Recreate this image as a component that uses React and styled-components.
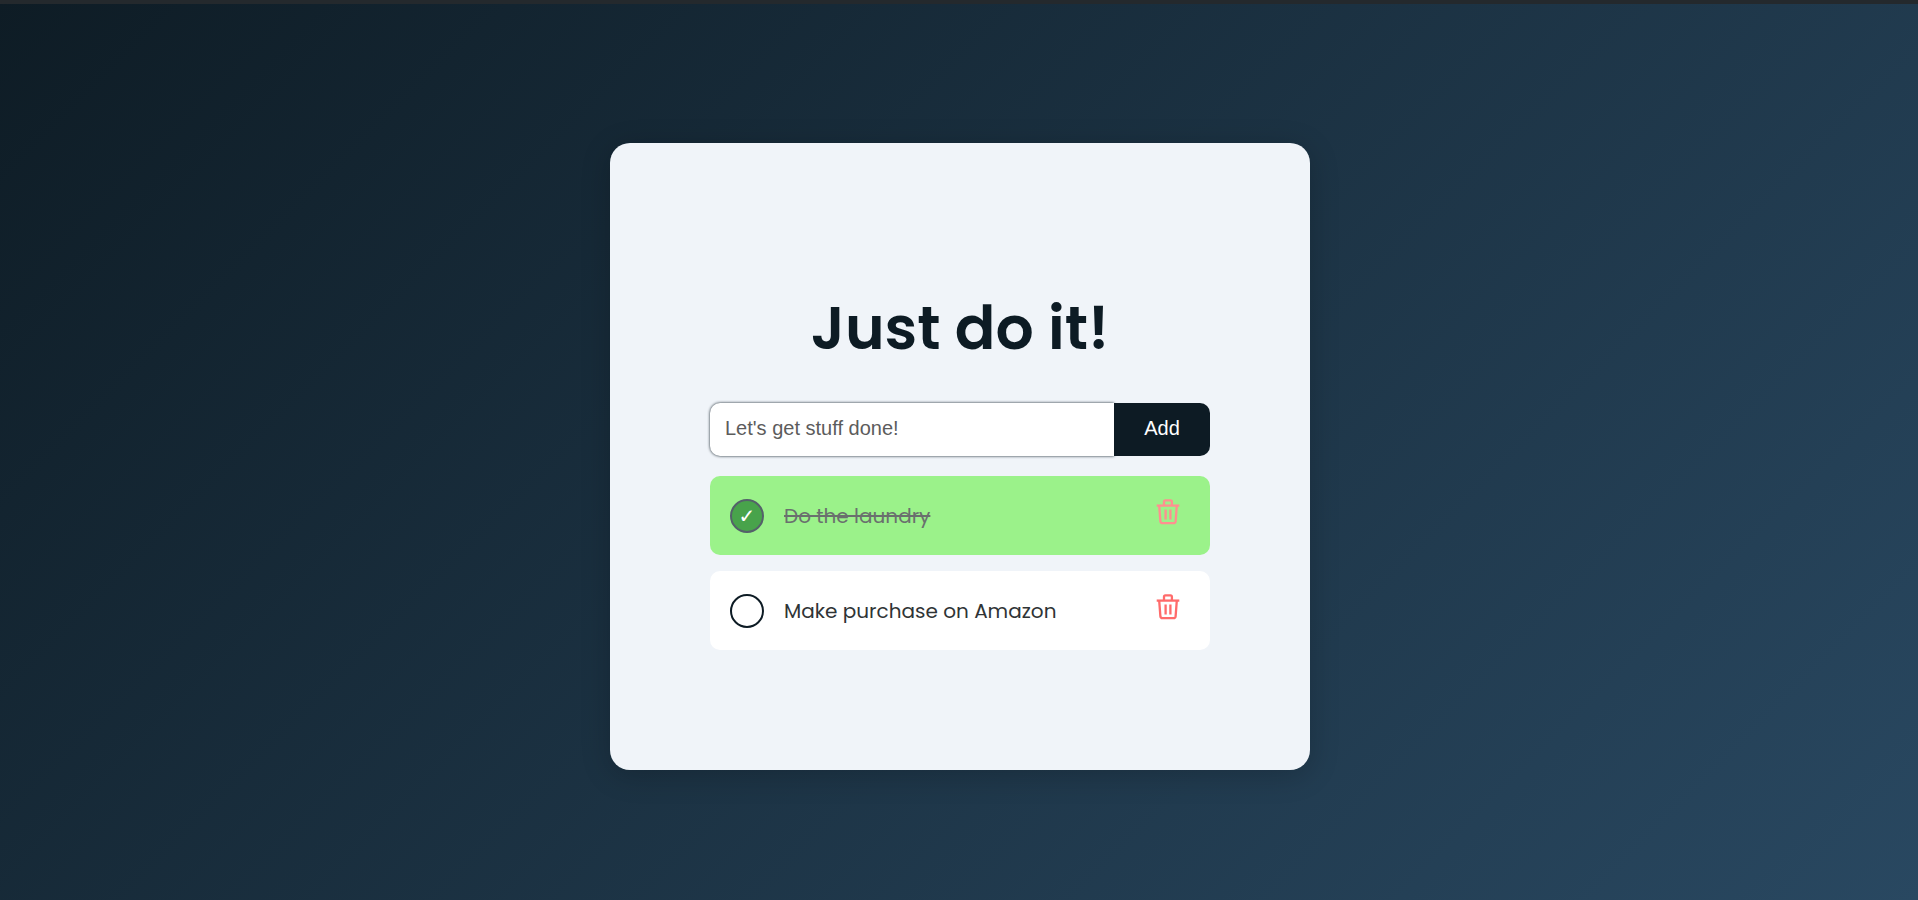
import React, { useState } from "react";
import styled, { createGlobalStyle } from "styled-components";

const GlobalStyle = createGlobalStyle`
  *, *::before, *::after { box-sizing: border-box; }
  body {
    margin: 0;
    font-family: Poppins, Inter, "Liberation Sans", sans-serif;
  }
`;

const Page = styled.div`
  min-height: 100vh;
  display: flex;
  flex-direction: column;
  background: linear-gradient(135deg, #0e1c25, #294861);
`;

const TopStrip = styled.div`
  height: 4px;
  background: #24292d;
`;

const Main = styled.main`
  flex: 1;
  display: flex;
  align-items: center;
  justify-content: center;
  padding: 29px 20px 20px 22px;
`;

const Card = styled.section`
  width: 100%;
  max-width: 700px;
  padding: 120px 100px;
  background: #f0f4f9;
  border-radius: 20px;
  box-shadow: 0 5px 30px rgba(0, 0, 0, 0.2);
`;

const Title = styled.h1`
  margin: 20px 0 30px;
  color: #0d1b24;
  font-size: 60px;
  line-height: 90px;
  font-weight: 600;
  text-align: center;
`;

const AddForm = styled.form`
  display: flex;
  height: 53px;
  margin-bottom: 20px;
`;

const TaskInput = styled.input`
  flex: 1;
  min-width: 0;
  padding: 14px 15px 16px;
  border: 0;
  border-radius: 10px 0 0 10px;
  background: #fff;
  color: #0d1b24;
  font: 20px "Liberation Sans", Arial, sans-serif;
  box-shadow: 0 0 3px #0d1b24;
  outline: none;
  &::placeholder { color: #5c5c5c; }
`;

const AddButton = styled.button`
  position: relative;
  width: 96px;
  padding: 14px 15px 16px;
  border: 0;
  border-radius: 0 10px 10px 0;
  background: #0d1b24;
  color: #fff;
  font: 20px "Liberation Sans", Arial, sans-serif;
  cursor: pointer;
`;

const List = styled.ul`
  display: flex;
  flex-direction: column;
  gap: 16px;
  margin: 0;
  padding: 0;
  list-style: none;
`;

const Item = styled.li`
  display: flex;
  align-items: center;
  height: 79px;
  padding: 0 30px 0 20px;
  border-radius: 10px;
  background: ${(p) => (p.$done ? "#9bf28a" : "#fff")};
`;

const TaskLabel = styled.label`
  flex: 1;
  display: flex;
  align-items: center;
  gap: 20px;
  font-size: 20px;
  line-height: 30px;
  cursor: pointer;
`;

const TaskText = styled.span`
  color: ${(p) => (p.$done ? "#6a706e" : "#2f3436")};
  text-decoration: ${(p) => (p.$done ? "line-through" : "none")};
`;

const Tick = styled.input`
  appearance: none;
  display: grid;
  place-items: center;
  width: 34px;
  height: 34px;
  margin: 0;
  border: 2px solid #0d1b24;
  border-radius: 50%;
  cursor: pointer;
  &:checked {
    border-color: #54616a;
    background: #48a34b;
  }
  &:checked::before {
    content: "✓";
    color: #fff;
    font: 20px/30px Poppins, "DejaVu Sans", sans-serif;
  }
`;

const DeleteButton = styled.button`
  display: flex;
  padding: 0 0 7px;
  border: 0;
  background: none;
  color: ${(p) => (p.$done ? "#ff9090" : "#ff6b6b")};
  cursor: pointer;
`;

const TrashIcon = () => (
  <svg
    width="24"
    height="26"
    viewBox="0 0 24 26"
    fill="none"
    stroke="currentColor"
    strokeWidth="2.3"
    strokeLinejoin="round"
    aria-hidden="true"
  >
    <path d="M0.7 6.6H23.3" />
    <path d="M8 6.6V3Q8 1.3 9.4 1.3H14.5Q15.9 1.3 15.9 3V6.6" />
    <path d="M3.2 6.6L4.4 22.4Q4.6 24.2 6.5 24.2H17.5Q19.4 24.2 19.6 22.4L20.8 6.6" />
    <path d="M9.6 10.4V20.6M14.4 10.4V20.6" />
  </svg>
);

export default function App() {
  const [draft, setDraft] = useState("");
  const [tasks, setTasks] = useState([
    { id: 1, text: "Do the laundry", done: true },
    { id: 2, text: "Make purchase on Amazon", done: false },
  ]);

  const addTask = (e) => {
    e.preventDefault();
    if (!draft.trim()) return;
    setTasks([...tasks, { id: Date.now(), text: draft.trim(), done: false }]);
    setDraft("");
  };
  const toggle = (id) =>
    setTasks(tasks.map((t) => (t.id === id ? { ...t, done: !t.done } : t)));
  const remove = (id) => setTasks(tasks.filter((t) => t.id !== id));

  return (
    <>
      <GlobalStyle />
      <Page>
        <TopStrip />
        <Main>
          <Card>
            <Title>Just do it!</Title>
            <AddForm onSubmit={addTask}>
              <TaskInput
                aria-label="New task"
                placeholder="Let's get stuff done!"
                value={draft}
                onChange={(e) => setDraft(e.target.value)}
              />
              <AddButton type="submit">Add</AddButton>
            </AddForm>
            <List>
              {tasks.map((t) => (
                <Item key={t.id} $done={t.done}>
                  <TaskLabel>
                    <Tick type="checkbox" checked={t.done} onChange={() => toggle(t.id)} />
                    <TaskText $done={t.done}>{t.text}</TaskText>
                  </TaskLabel>
                  <DeleteButton
                    type="button"
                    $done={t.done}
                    aria-label="Delete task"
                    onClick={() => remove(t.id)}
                  >
                    <TrashIcon />
                  </DeleteButton>
                </Item>
              ))}
            </List>
          </Card>
        </Main>
      </Page>
    </>
  );
}
